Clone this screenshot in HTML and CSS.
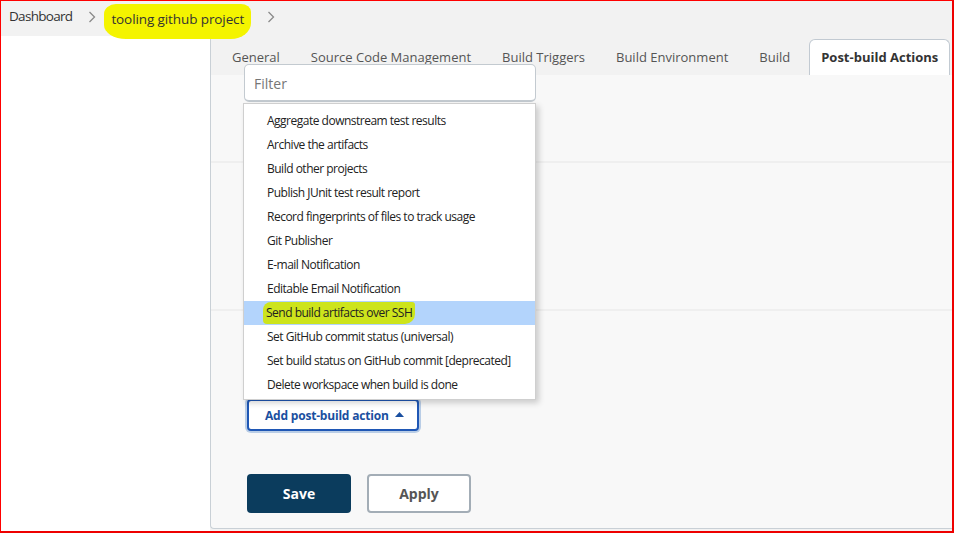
FILE: index.html
```html
<!DOCTYPE html>
<html>
<head>
<meta charset="utf-8">
<link rel="stylesheet" href="styles.css">
</head>
<body>
<div class="frame">
  <header class="crumbs">
    <span class="crumb first">Dashboard</span>
    <svg class="chev" width="8" height="12" viewBox="0 0 8 12"><polyline points="1.5,1 6.5,6 1.5,11" fill="none" stroke="#8a8a8a" stroke-width="1.3"/></svg>
    <span class="crumb hl">tooling github project</span>
    <svg class="chev" width="8" height="12" viewBox="0 0 8 12"><polyline points="1.5,1 6.5,6 1.5,11" fill="none" stroke="#8a8a8a" stroke-width="1.3"/></svg>
  </header>
  <div class="main">
    <aside class="side"></aside>
    <section class="panel">
      <nav class="tabs">
        <span class="tab">General</span>
        <span class="tab">Source Code Management</span>
        <span class="tab">Build Triggers</span>
        <span class="tab">Build Environment</span>
        <span class="tab">Build</span>
        <span class="tab active">Post-build Actions</span>
      </nav>
      <div class="body">
        <div class="sec sec1"></div>
        <div class="sec sec2"></div>
        <div class="sec sec3">
          <button class="add">Add post-build action <svg width="9" height="5" viewBox="0 0 9 5"><polygon points="0,5 4.5,0 9,5" fill="#1a4fa0"/></svg></button>
          <div class="bottom">
            <button class="save">Save</button>
            <button class="apply">Apply</button>
          </div>
        </div>
      </div>
      <div class="menu">
        <div class="filter">Filter</div>
        <ul class="list">
          <li>Aggregate downstream test results</li>
          <li>Archive the artifacts</li>
          <li>Build other projects</li>
          <li>Publish JUnit test result report</li>
          <li>Record fingerprints of files to track usage</li>
          <li>Git Publisher</li>
          <li>E-mail Notification</li>
          <li>Editable Email Notification</li>
          <li class="sel"><span class="mark">Send build artifacts over SSH</span></li>
          <li>Set GitHub commit status (universal)</li>
          <li>Set build status on GitHub commit [deprecated]</li>
          <li>Delete workspace when build is done</li>
        </ul>
      </div>
    </section>
  </div>
</div>
</body>
</html>
```
FILE: styles.css
```css
* { box-sizing: border-box; }
html, body { margin: 0; padding: 0; background: #fff; }
body { font-family: "Open Sans", "Noto Sans", sans-serif; color: #333; }

.frame {
  width: 954px;
  height: 533px;
  border-left: 1px solid #f00;
  border-top: 1px solid #f00;
  border-right: 2px solid #e00;
  border-bottom: 2px solid #e00;
  display: flex;
  flex-direction: column;
  overflow: hidden;
  background: #f2f2f2;
}

.crumbs {
  height: 35px;
  display: flex;
  align-items: flex-start;
  padding: 5px 0 0 8px;
  font-size: 13.5px;
  color: #333;
  position: relative;
  z-index: 2;
}
.crumb { line-height: 20px; letter-spacing: -0.1px; white-space: nowrap; }
.crumb.first { letter-spacing: -0.7px; }
.chev { margin: 5px 14px 0 16px; flex-shrink: 0; }
.hl {
  background: #f4f400;
  padding: 5px 7px 10px 7px;
  margin-left: -6px;
  margin-top: -2px;
  border-radius: 12px 10px 20px 22px / 10px 8px 16px 14px;
}

.main { flex: 1; display: flex; min-height: 0; }
.side { width: 209px; flex-shrink: 0; background: #fff; }
.panel {
  flex: 1;
  min-width: 0;
  position: relative;
  border-left: 1px solid #c9d0d6;
  border-bottom: 1px solid #c9d0d6;
  border-bottom-left-radius: 4px;
  margin-bottom: 2px;
  display: flex;
  flex-direction: column;
  background: #f8f8f8;
}

.tabs {
  height: 39px;
  background: #f2f2f2;
  display: flex;
  align-items: flex-end;
  gap: 7px;
  padding-left: 9px;
  overflow: hidden;
}
.tab {
  height: 36px;
  padding: 0 11px 2px 11px;
  display: flex;
  align-items: center;
  flex-shrink: 0;
  white-space: nowrap;
  font-size: 13px;
  color: #555;
  letter-spacing: 0;
  border: 1px solid transparent;
  border-bottom: none;
}
.tab.active {
  background: #fff;
  border-color: #c2cad2;
  border-radius: 6px 6px 0 0;
  font-weight: 700;
  color: #333;
}

.body { flex: 1; display: flex; flex-direction: column; }
.sec1 { height: 88px; border-bottom: 2px solid #efefef; }
.sec2 { height: 148px; border-bottom: 2px solid #efefef; }
.sec3 { flex: 1; padding: 88px 0 0 36px; display: flex; flex-direction: column; align-items: flex-start; }

button { font-family: "Open Sans", "Noto Sans", sans-serif; cursor: pointer; }
.add {
  height: 32px;
  width: 172px;
  padding: 0 0 0 16px;
  background: #fff;
  border: 2px solid #1f57b5;
  border-radius: 4px;
  box-shadow: 0 0 0 2px #b9cde6;
  color: #1a4fa0;
  font-weight: 700;
  font-size: 12px;
  letter-spacing: -0.2px;
  display: flex;
  align-items: center;
  gap: 6px;
}
.add svg { margin-top: -2px; }

.bottom { display: flex; gap: 16px; margin-top: 43px; }
.save, .apply {
  height: 39px;
  width: 104px;
  border-radius: 4px;
  font-size: 14px;
  font-weight: 700;
}
.save { background: #0b3c5d; color: #fff; border: none; }
.apply { background: #fff; color: #555; border: 2px solid #a3adb6; }

.menu {
  position: absolute;
  left: 32px;
  top: 28px;
  width: 293px;
}
.filter {
  margin-left: 1px;
  height: 38px;
  width: 292px;
  background: #fff;
  border: 1px solid #c3cad0;
  border-bottom-width: 2px;
  border-radius: 5px;
  font-size: 14px;
  color: #767676;
  padding: 10px 0 0 9px;
  line-height: 18px;
}
.list {
  list-style: none;
  margin: 1px 0 0 0;
  padding: 5px 0 2px 0;
  background: #fff;
  border: 1px solid #cfcfcf;
  box-shadow: 3px 3px 6px rgba(0,0,0,0.18);
}
.list li {
  height: 24px;
  line-height: 24px;
  padding-left: 23px;
  font-size: 12px;
  color: #222;
  letter-spacing: -0.5px;
  white-space: nowrap;
}
.list li.sel { background: #b3d4fc; }
.mark {
  background: #cde41c;
  padding: 2px 3px 3px 3px;
  margin-left: -4px;
  border-radius: 8px 3px 10px 4px;
}
```
